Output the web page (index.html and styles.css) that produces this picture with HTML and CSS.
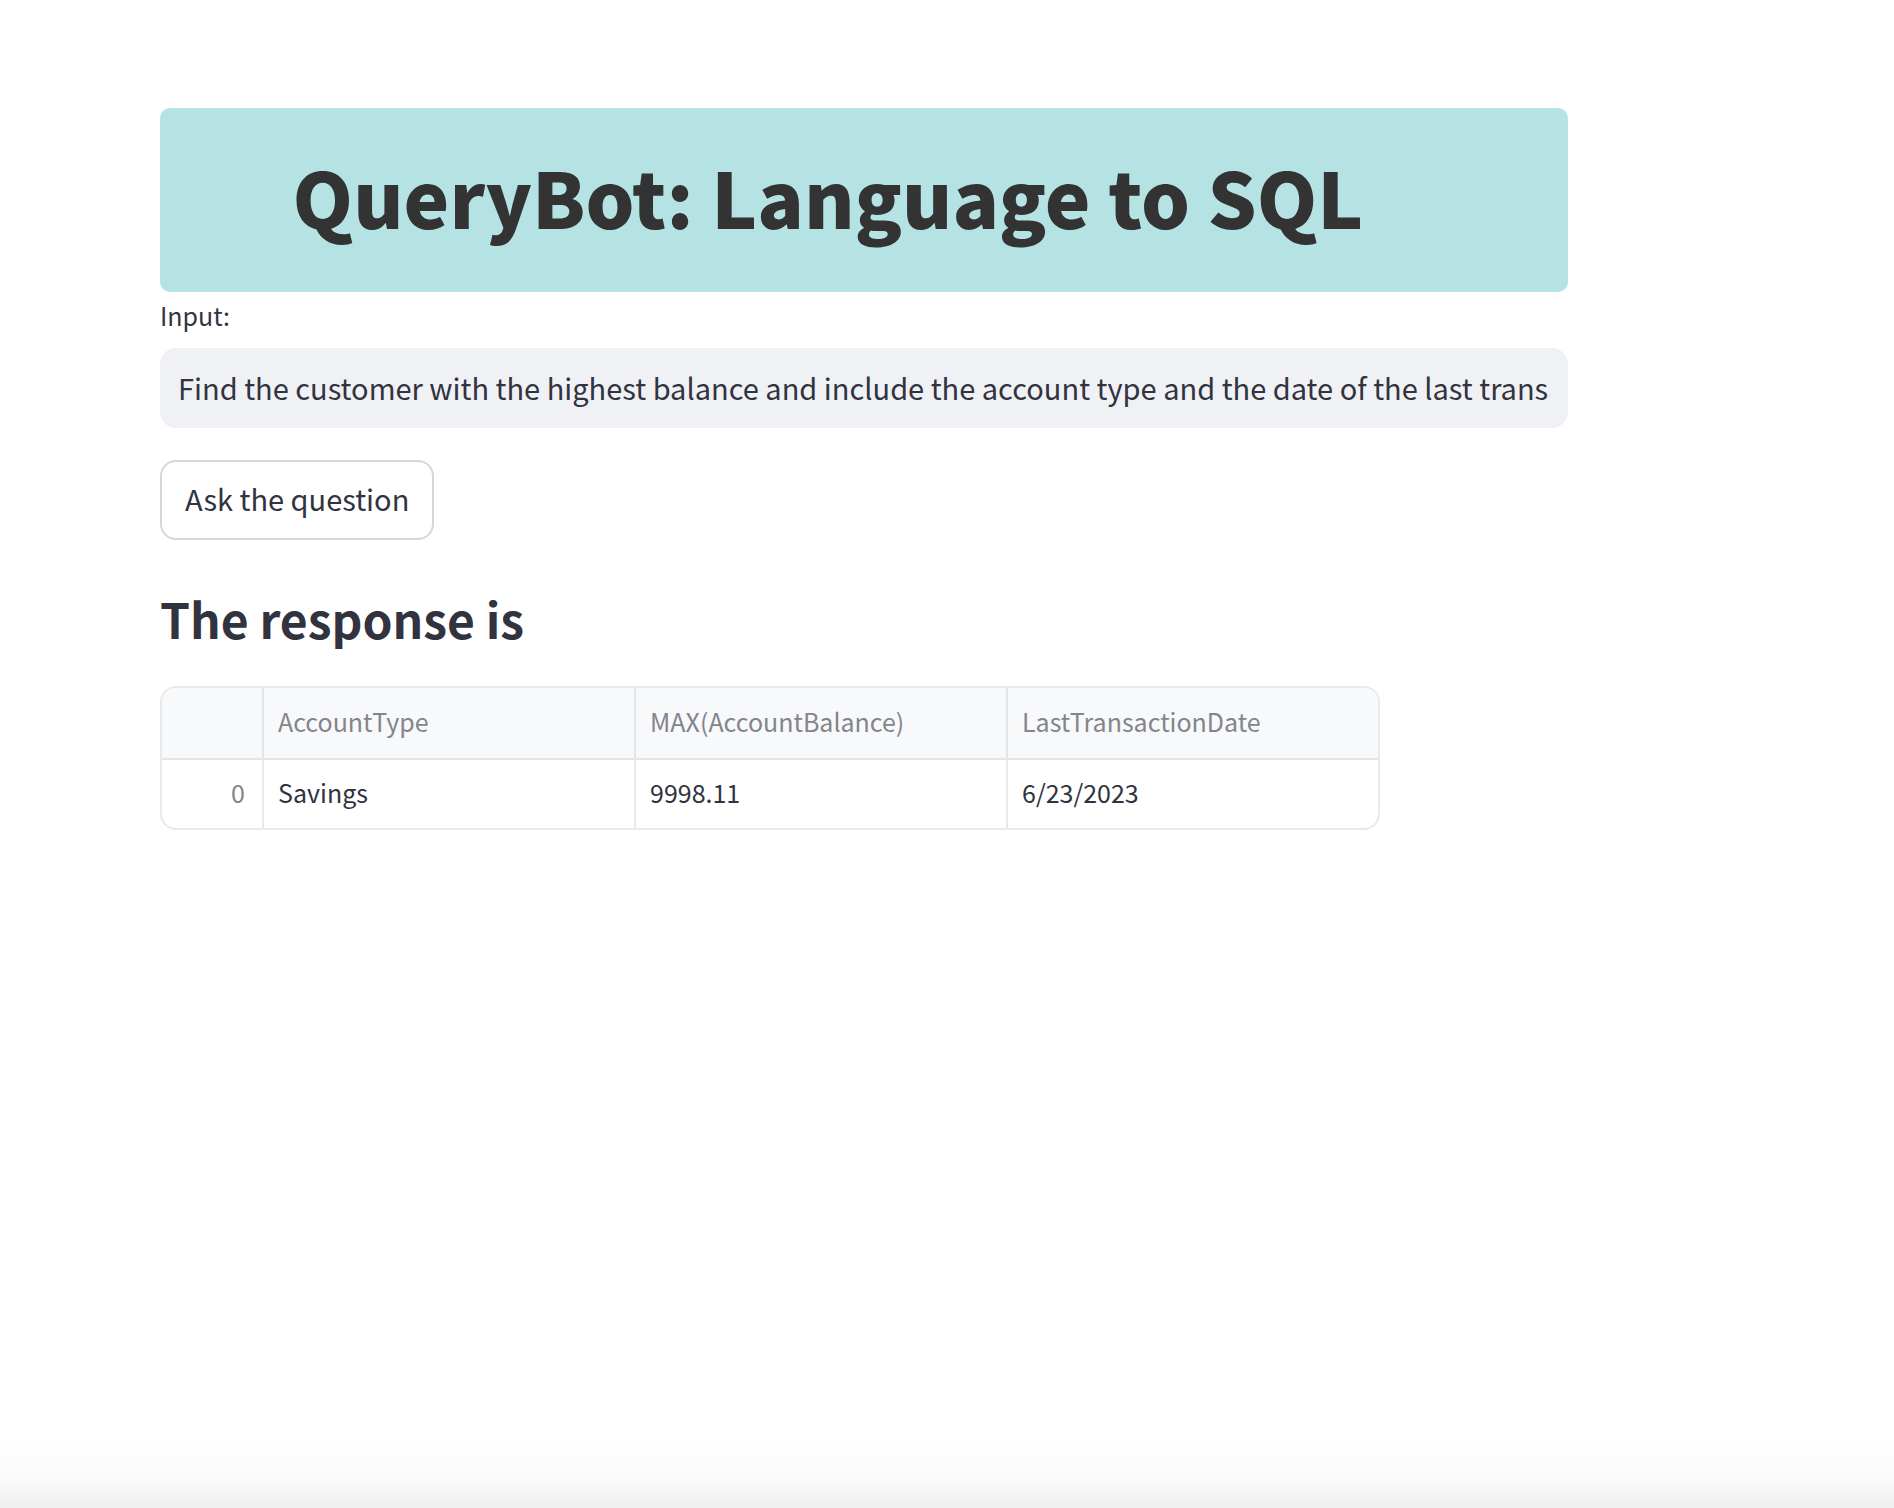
FILE: index.html
```
<!DOCTYPE html>
<html lang="en">
<head>
<meta charset="utf-8">
<meta name="viewport" content="width=device-width, initial-scale=1">
<title>QueryBot: Language to SQL</title>
<link rel="stylesheet" href="styles.css">
</head>
<body>
<main class="page">
  <header class="banner">
    <h1 class="banner-title">QueryBot: Language to SQL</h1>
  </header>
  <form class="query-form">
    <label class="query-label" for="question">Input:</label>
    <input class="query-input" id="question" type="text" value="Find the customer with the highest balance and include the account type and the date of the last transaction">
    <button class="query-button" type="button">Ask the question</button>
  </form>
  <section class="response">
    <h2 class="response-title">The response is</h2>
    <div class="table-frame">
      <table class="table">
        <thead>
          <tr>
            <th class="index-col"></th>
            <th scope="col">AccountType</th>
            <th scope="col">MAX(AccountBalance)</th>
            <th scope="col">LastTransactionDate</th>
          </tr>
        </thead>
        <tbody>
          <tr>
            <th class="index-col" scope="row">0</th>
            <td>Savings</td>
            <td>9998.11</td>
            <td>6/23/2023</td>
          </tr>
        </tbody>
      </table>
    </div>
  </section>
</main>
<div class="bottom-shade"></div>
</body>
</html>
```
FILE: styles.css
```
* {
  box-sizing: border-box;
}

body {
  margin: 0;
  min-height: 100vh;
  display: flex;
  flex-direction: column;
  background: #fff;
  color: #31333f;
  font-family: "Source Sans Pro", "Noto Sans CJK SC", sans-serif;
  font-size: 29px;
}

.page {
  flex: 1;
  padding: 108px 326px 0 160px;
}

.banner {
  padding: 36px 72px 44px 0;
  border-radius: 10px;
  background: #b5e3e3;
  text-align: center;
}

.banner-title {
  margin: 0;
  color: #333;
  font-size: 77px;
  line-height: 104px;
  font-weight: 900;
}

.query-form {
  display: flex;
  flex-direction: column;
  align-items: flex-start;
}

.query-label {
  padding: 3px 0 13px;
  font-size: 25px;
  line-height: 40px;
}

.query-input {
  width: 100%;
  height: 80px;
  padding: 0 18px 2px;
  border: 0;
  border-radius: 16px;
  background: #f0f1f5;
  color: inherit;
  font: inherit;
}

.query-button {
  height: 80px;
  margin-top: 32px;
  padding: 0 23px 4px;
  border: 2px solid #d6d6d8;
  border-radius: 16px;
  background: #fff;
  color: inherit;
  font: inherit;
}

.response-title {
  margin: 45px 0 35px;
  font-size: 48px;
  line-height: 66px;
  font-weight: 600;
}

.table-frame {
  max-width: 1220px;
  border: 2px solid #e8e9eb;
  border-radius: 16px;
  overflow: hidden;
}

.table {
  width: 100%;
  table-layout: fixed;
  border-collapse: separate;
  border-spacing: 0;
  font-size: 25px;
  line-height: 36px;
}

.table th,
.table td {
  width: 372px;
  height: 68px;
  padding: 0 14px 4px;
  border-right: 2px solid #e8e9eb;
  text-align: left;
  font-weight: 400;
}

.table th {
  color: #84858c;
}

.table thead th {
  height: 72px;
  border-color: #e2e4e7;
  border-bottom: 2px solid #e2e4e7;
  background: #f8f9fb;
}

.table th:last-child,
.table td:last-child {
  width: auto;
  border-right: 0;
}

.table .index-col {
  width: 102px;
  padding-right: 17px;
  text-align: right;
}

.bottom-shade {
  height: 68px;
  background: linear-gradient(#fff, #fafafa 60%, #efefef);
}
```
